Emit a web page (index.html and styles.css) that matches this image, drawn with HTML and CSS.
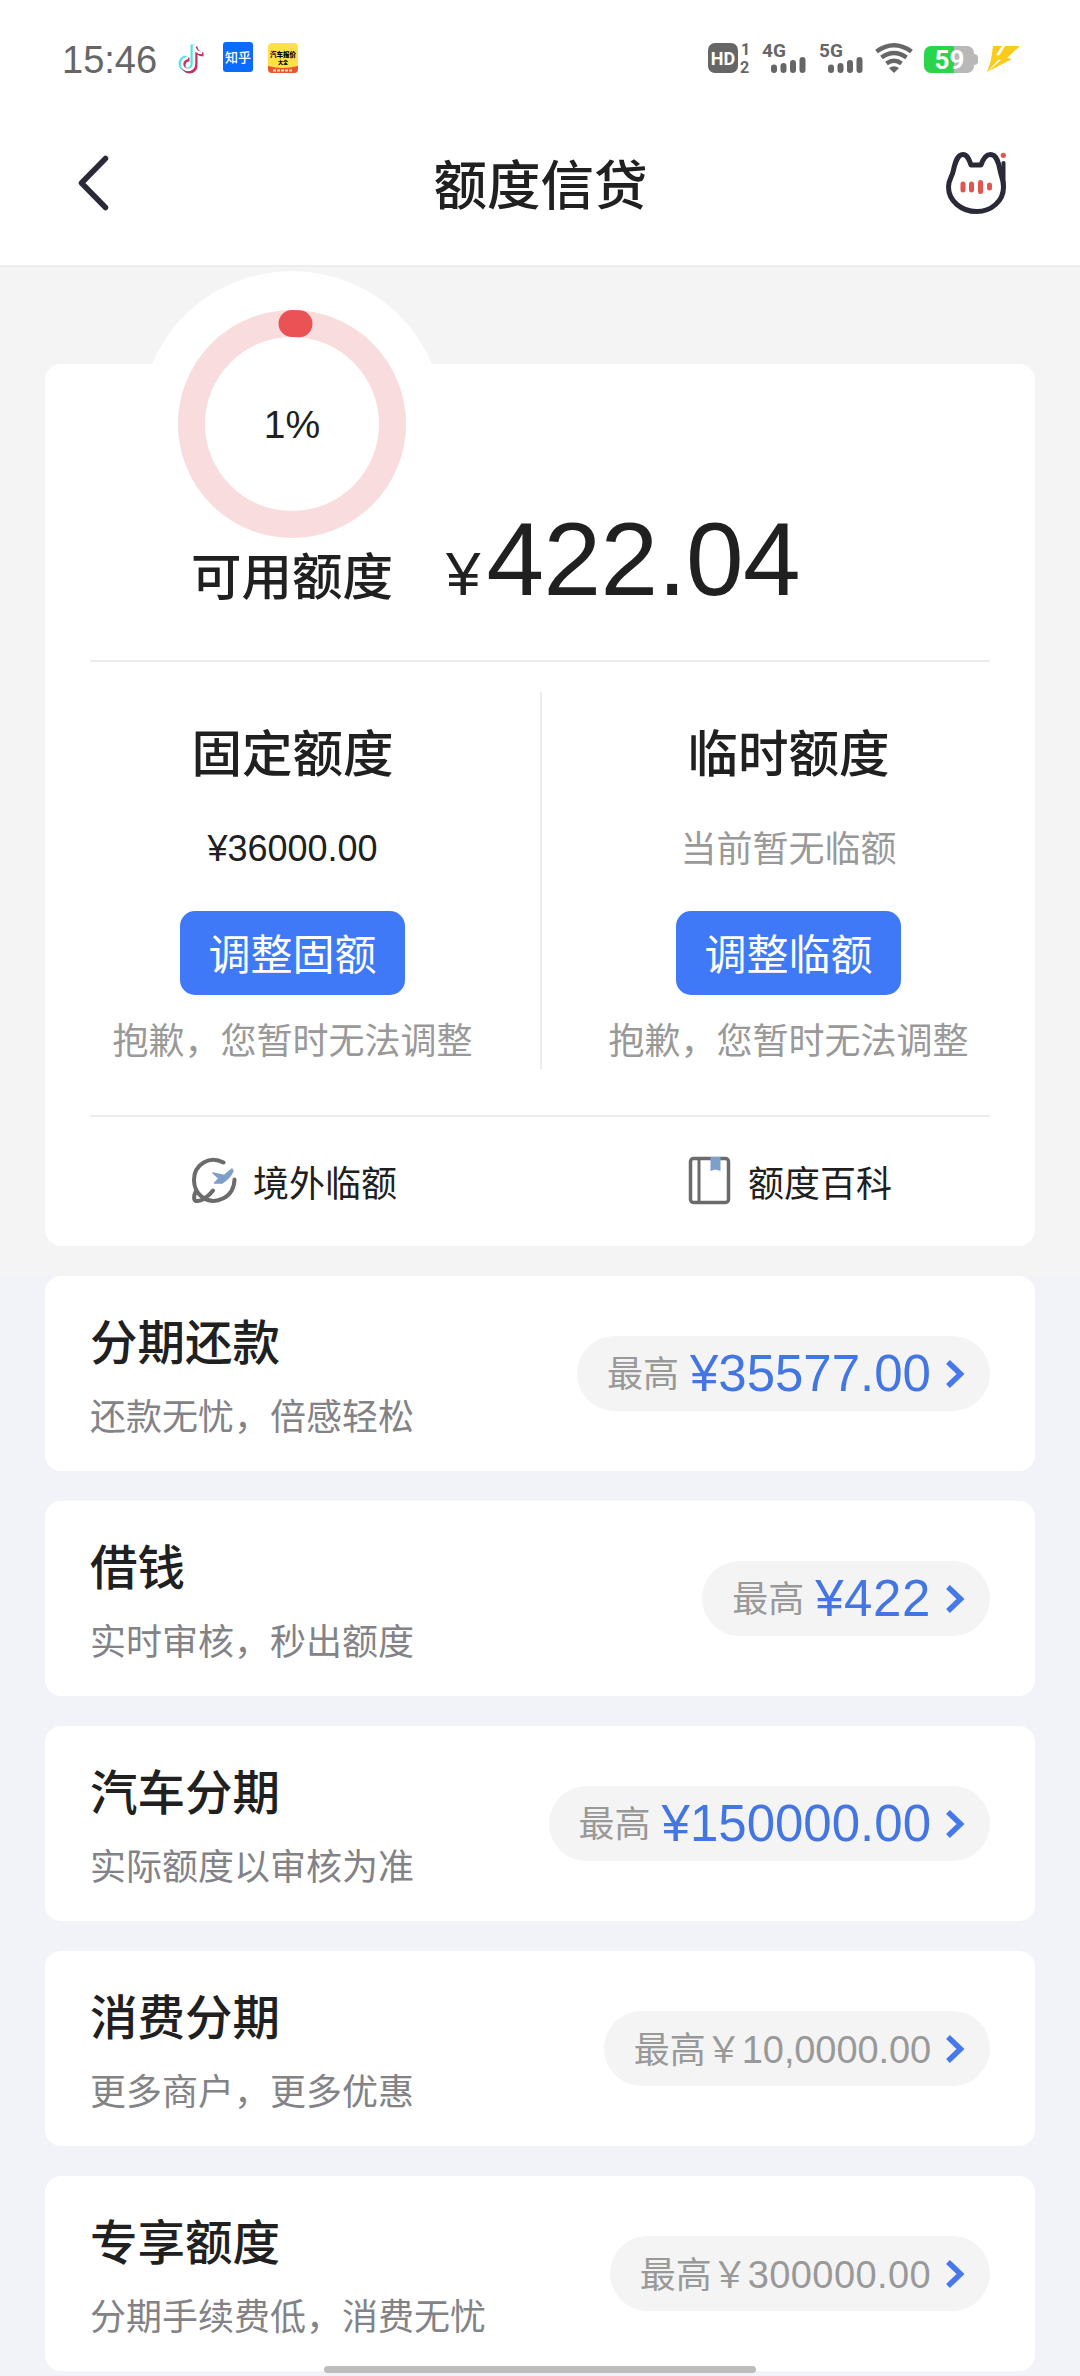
FILE: index.html
```html
<!DOCTYPE html>
<html lang="zh-CN">
<head>
<meta charset="utf-8">
<title>额度信贷</title>
<link rel="stylesheet" href="styles.css">
</head>
<body>
<header class="top">
  <div class="status">
    <span class="time">15:46</span>
    <svg class="apps" width="124" height="36" viewBox="176 40 124 36">
      <g fill="none" stroke-width="4">
        <path d="M194 45V64a6 6 0 1 1-6-6M194 46c1 5 4 7 8 7" stroke="#4fe3e6" transform="translate(-1.500 -.5)"/>
        <path d="M194 45V64a6 6 0 1 1-6-6M194 46c1 5 4 7 8 7" stroke="#c92d62" transform="translate(1.500 1.500)"/>
        <path d="M194 45V64a6 6 0 1 1-6-6M194 46c1 5 4 7 8 7" stroke="#fff" stroke-width="2.600"/>
      </g>
      <rect x="223" y="42" width="30" height="30" rx="3" fill="#0a6bff"/>
      <text x="238" y="62" class="app-zh">知乎</text>
      <rect x="268" y="43" width="30" height="30" rx="4" fill="#ffe04a"/>
      <path d="M268 66q15 4 30 0v3a4 4 0 0 1-4 4h-22a4 4 0 0 1-4-4z" fill="#e8552f"/>
      <text x="283" y="56.500" class="app-car">汽车报价</text>
      <text x="283" y="64" class="app-sub">大全</text>
      <path d="M273 70.500h20" stroke="#ffd9c8" stroke-width="2" stroke-dasharray="3 1"/>
    </svg>
    <svg class="signals" width="316" height="36" viewBox="706 40 316 36">
      <rect x="708" y="43" width="30" height="30" rx="7" fill="#666"/>
      <text x="723" y="65" class="hd">HD</text>
      <text x="741" y="55" class="sim">1</text>
      <text x="740" y="72.500" class="sim">2</text>
      <text x="762" y="57" class="net">4G</text>
      <text x="819" y="57" class="net">5G</text>
      <g stroke="#666" stroke-width="6" stroke-linecap="round">
        <path d="M774 67.500v2.500M783.500 66v4M793 63v7M802.500 60v10"/>
        <path d="M831 67.500v2.500M840.500 66v4M850 63v7M859.500 60v10"/>
      </g>
      <g fill="none" stroke="#666" stroke-width="4.500">
        <path d="M876.500 51.500q17.500-12.500 35 0M881.500 57.500q12.500-9 25 0M886.500 63.500q7.500-5.500 15 0"/>
      </g>
      <path d="M889 68q5-3.500 10 0l-5 5z" fill="#666"/>
      <path d="M931 46h23v27h-23a7 7 0 0 1-7-7v-13a7 7 0 0 1 7-7z" fill="#2bd44b"/>
      <path d="M954 46h13a7 7 0 0 1 7 7v1q4 0 4 3.500v4q0 3.500-4 3.500v1a7 7 0 0 1-7 7h-13z" fill="#b8b8b8"/>
      <text x="949.500" y="69" class="bat">59</text>
      <path d="M993 46h9l-6 9 6 1-15 16 4-12zM1005 46h15l-13 12 5 1-25 13 14-12-4-1z" fill="#fbcb1c"/>
    </svg>
  </div>
  <div class="nav">
    <svg width="34" height="60" viewBox="76 153 34 60" fill="none" stroke="#292938" stroke-width="5.500" stroke-linecap="round" stroke-linejoin="round"><path d="M105.500 158.500 81.500 183l24 24.500"/></svg>
    <h1 class="title">额度信贷</h1>
    <svg width="64" height="66" viewBox="943 150 64 66" fill="none" stroke="#292938" stroke-width="5" stroke-linecap="round" stroke-linejoin="round">
      <path d="M970 165h10c2-6 5-10.500 9.500-10.500 6 0 8 8 9.500 15.500.8 6 3.500 9 3.500 17 0 14-12 24.500-27 24.500s-28-10.500-28-24.500c0-7 3.500-10.500 4.500-15 2-9 4-17.500 10-17.500 4 0 6 4.500 8 10.500z"/><path d="M1002.500 163v24" stroke-width="4"/>
      <g stroke="#e2544f"><path d="M962 184v6M970.500 184v6M979.500 182.500v9M988.500 185v3"/><circle cx="1002.300" cy="155.300" r="2.600" fill="#e2544f" stroke="none"/></g>
    </svg>
  </div>
</header>

<main>
  <section class="hero">
    <div class="card limit">
      <div class="gauge">
        <svg width="304" height="304" viewBox="0 0 304 304" fill="none" stroke-width="27">
          <circle cx="152" cy="152" r="152" fill="#fff" stroke="none"/>
          <circle cx="152" cy="153" r="100.500" stroke="#f9dcdd"/>
          <path d="M152 52.500a100.500 100.500 0 0 1 7 .25" stroke="#ea5255" stroke-linecap="round"/>
        </svg>
        <span class="percent">1%</span>
      </div>
      <div class="avail">
        <h2 class="heading">可用额度</h2>
        <div class="amount"><span class="yen">¥</span>422.04</div>
      </div>
      <div class="split">
        <div class="col">
          <h2 class="heading">固定额度</h2>
          <p class="value num">¥36000.00</p>
          <button class="btn">调整固额</button>
          <p class="note">抱歉，您暂时无法调整</p>
        </div>
        <div class="col">
          <h2 class="heading">临时额度</h2>
          <p class="value none">当前暂无临额</p>
          <button class="btn">调整临额</button>
          <p class="note">抱歉，您暂时无法调整</p>
        </div>
      </div>
      <div class="links">
        <a class="link">
          <svg width="46" height="50" viewBox="0 0 46 50" fill="none" stroke="#6b6b6b" stroke-width="4" stroke-linecap="round">
            <path d="M32.500 6.500C19-1 3 8 3 24c0 7 3 13 8 17 13 9 32 1 32.500-17.500M5 35c-2 4-3 9 0 10 5 1 13-5 17-10.500"/>
            <path d="M41 13 33 19.500l-11-2.500 6 5.500-4.500 4.500h7.500q8-5 11-12z" fill="#7d9fc9" stroke="#7d9fc9" stroke-width="1.500" stroke-linejoin="round"/>
          </svg>
          <span>境外临额</span>
        </a>
        <a class="link">
          <svg width="44" height="50" viewBox="0 0 44 50" fill="none" stroke="#6b6b6b" stroke-width="3.500">
            <rect x="2.500" y="2.500" width="38" height="44" rx="3"/>
            <path d="M11 2.500v44" stroke-width="3"/>
            <path d="M22.500 1h10v14l-5-1.500-5 1.500z" fill="#7d9fc9" stroke="none"/>
          </svg>
          <span>额度百科</span>
        </a>
      </div>
    </div>
  </section>

  <section class="list">
    <article class="card item">
      <div><h3 class="name">分期还款</h3><p class="desc">还款无忧，倍感轻松</p></div>
      <div class="pill"><span class="max">最高</span><b class="sum">¥35577.00</b><svg class="arrow" viewBox="0 0 20 30"><path d="M3 3 15.500 15 3 27"/></svg></div>
    </article>
    <article class="card item">
      <div><h3 class="name">借钱</h3><p class="desc">实时审核，秒出额度</p></div>
      <div class="pill"><span class="max">最高</span><b class="sum whole">¥422</b><svg class="arrow" viewBox="0 0 20 30"><path d="M3 3 15.500 15 3 27"/></svg></div>
    </article>
    <article class="card item">
      <div><h3 class="name">汽车分期</h3><p class="desc">实际额度以审核为准</p></div>
      <div class="pill"><span class="max">最高</span><b class="sum">¥150000.00</b><svg class="arrow" viewBox="0 0 20 30"><path d="M3 3 15.500 15 3 27"/></svg></div>
    </article>
    <article class="card item">
      <div><h3 class="name">消费分期</h3><p class="desc">更多商户，更多优惠</p></div>
      <div class="pill"><span class="max low">最高￥</span><span class="plain">10,0000.00</span><svg class="arrow" viewBox="0 0 20 30"><path d="M3 3 15.500 15 3 27"/></svg></div>
    </article>
    <article class="card item">
      <div><h3 class="name">专享额度</h3><p class="desc">分期手续费低，消费无忧</p></div>
      <div class="pill"><span class="max low">最高￥</span><span class="plain wide">300000.00</span><svg class="arrow" viewBox="0 0 20 30"><path d="M3 3 15.500 15 3 27"/></svg></div>
    </article>
  </section>
</main>
<div class="home-bar"></div>
</body>
</html>
```
FILE: styles.css
```css
* { box-sizing: border-box; margin: 0; padding: 0; }
body {
  width: 1080px;
  height: 2376px;
  overflow: hidden;
  position: relative;
  background: #f2f3f8;
  color: #202020;
  font-family: "Noto Sans CJK SC", sans-serif;
}
svg { display: block; flex: none; }

.top { height: 267px; background: #fff; border-bottom: 2px solid #ededed; }
.status { height: 116px; padding: 0 58px 0 62px; display: flex; align-items: center; }
.time { width: 114px; padding-top: 3px; font: 38px/40px "Liberation Sans", sans-serif; color: #666; }
.signals { margin-left: auto; }
.signals text { font-family: Roboto, sans-serif; font-weight: 700; fill: #666; }
.signals .hd { font-size: 18px; fill: #fff; text-anchor: middle; }
.signals .sim { font-size: 16px; }
.signals .net { font-size: 19px; }
.signals .bat { font-size: 26px; fill: #fff; text-anchor: middle; }
.app-zh { font-size: 13px; font-weight: 500; fill: #fff; text-anchor: middle; }
.app-car { font-size: 6.500px; font-weight: 900; text-anchor: middle; }
.app-sub { font-size: 5px; font-weight: 900; text-anchor: middle; }
.nav { height: 134px; padding: 0 72px 0 76px; display: grid; grid-template-columns: 64px 1fr 64px; align-items: center; }
.title { padding-right: 3px; padding-bottom: 2px; font-size: 53.500px; line-height: 60px; font-weight: 500; text-align: center; }

.card { background: #fff; border-radius: 16px; }
.hero { height: 1009px; padding: 97px 45px 0; background: #f4f4f4; }
.limit { height: 882px; display: flex; flex-direction: column; }
.gauge { width: 304px; height: 304px; margin: -93px 0 0 95px; display: grid; }
.gauge > * { grid-area: 1 / 1; }
.percent { place-self: center; padding-top: 4px; font: 39px/44px "Liberation Sans", sans-serif; }
.avail { height: 163px; margin: -76px 45px 0; padding-left: 101px; display: flex; align-items: baseline; border-bottom: 2px solid #ececec; z-index: 1; }
.heading { font-size: 50.500px; line-height: 60px; font-weight: 500; }
.amount { margin-left: 53px; font: 103.500px/120px "Liberation Sans", sans-serif; letter-spacing: -.5px; }
.yen { font-size: 62px; letter-spacing: 6px; }
.split { margin: 30px 0 46px; height: 377px; display: grid; grid-template-columns: 1fr 1fr; }
.col { display: flex; flex-direction: column; align-items: center; padding-top: 28px; }
.col + .col { border-left: 2px solid #ececec; }
.value { height: 50px; margin-top: 41px; font-size: 36px; line-height: 50px; }
.num { font-family: "Liberation Sans", sans-serif; line-height: 56px; }
.none, .note { color: #999; }
.btn { width: 225px; height: 84px; margin-top: 40px; padding-bottom: 2px; border: 0; border-radius: 15px; background: #4079f7; color: #fff; font: 42px/60px "Noto Sans CJK SC", sans-serif; }
.note { margin-top: 16px; font-size: 36px; line-height: 54px; }
.links { margin: 0 45px; height: 130px; border-top: 2px solid #ececec; display: grid; grid-template-columns: 1fr 1fr; }
.link { display: flex; align-items: center; padding-left: 101px; font-size: 36px; line-height: 50px; }
.link + .link { padding-left: 148px; }
.link span { margin-left: 16px; padding-bottom: 1px; }

.list { padding: 0 45px; display: grid; gap: 30px; }
.item { height: 195px; padding: 0 45px; display: flex; justify-content: space-between; align-items: center; }
.name { padding-top: 4px; font-size: 47.500px; line-height: 60px; font-weight: 500; }
.desc { margin-top: 17px; font-size: 36px; line-height: 54px; color: #828287; }
.pill { height: 75px; padding: 0 25px 0 30px; border-radius: 37.500px; background: #f4f4f4; display: flex; align-items: center; color: #999; font-size: 36px; }
.max { padding-bottom: 5px; }
.low { padding-bottom: 3px; }
.sum { margin-left: 11px; font: 400 51px/60px "Liberation Sans", sans-serif; color: #4376e2; }
.whole { letter-spacing: .6px; }
.plain { padding-top: 4px; font-family: "Liberation Sans", sans-serif; font-size: 38px; letter-spacing: -.1px; }
.wide { letter-spacing: .4px; }
.arrow { width: 20px; height: 30px; margin-left: 14px; fill: none; stroke: #4578ea; stroke-width: 5.500; }

.home-bar { position: absolute; left: 324px; top: 2366px; width: 432px; height: 7px; border-radius: 4px; background: #bdbdbd; }
```
